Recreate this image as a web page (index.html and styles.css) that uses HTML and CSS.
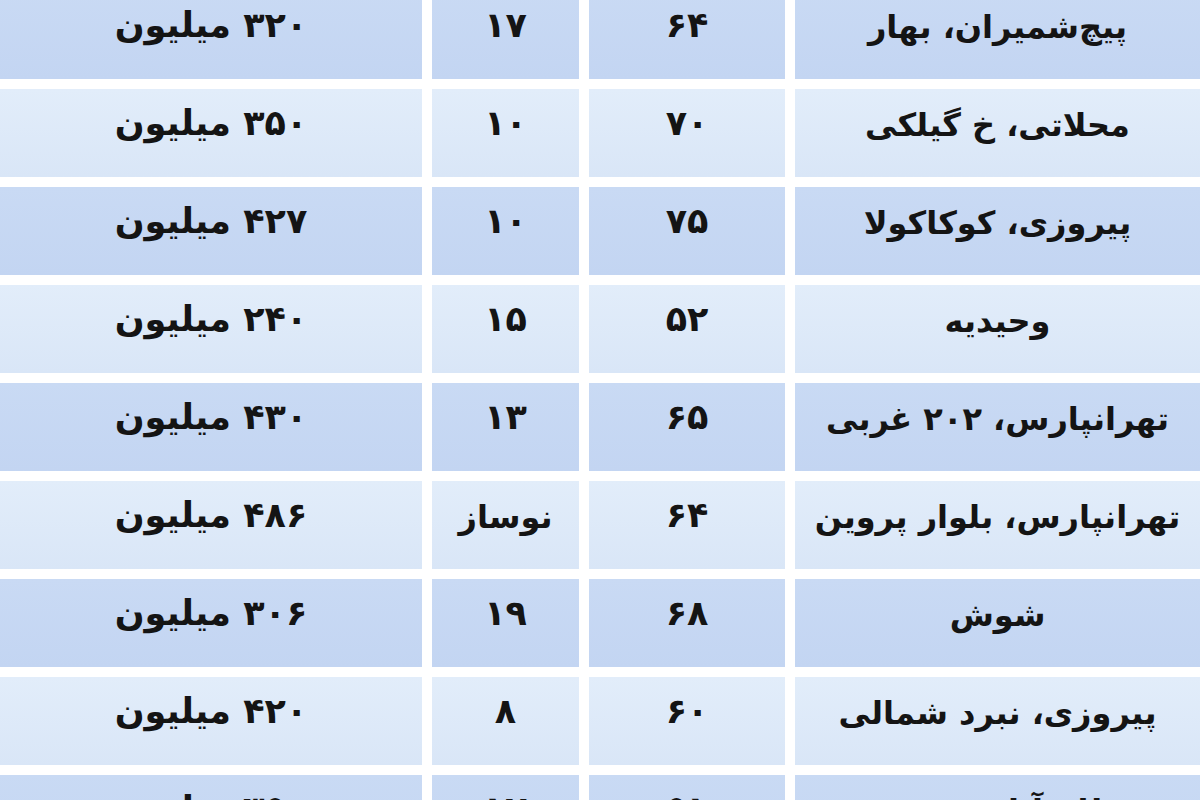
FILE: index.html
```html
<!DOCTYPE html>
<html lang="fa" dir="rtl">
<head>
<meta charset="utf-8">
<link rel="stylesheet" href="styles.css">
</head>
<body>
<div class="table">
  <div class="cell dark loc">پیچ‌شمیران، بهار</div><div class="cell dark">۶۴</div><div class="cell dark">۱۷</div><div class="cell dark">۳۲۰ میلیون</div>
  <div class="cell light loc">محلاتی، خ گیلکی</div><div class="cell light">۷۰</div><div class="cell light">۱۰</div><div class="cell light">۳۵۰ میلیون</div>
  <div class="cell dark loc">پیروزی، کوکاکولا</div><div class="cell dark">۷۵</div><div class="cell dark">۱۰</div><div class="cell dark">۴۲۷ میلیون</div>
  <div class="cell light loc">وحیدیه</div><div class="cell light">۵۲</div><div class="cell light">۱۵</div><div class="cell light">۲۴۰ میلیون</div>
  <div class="cell dark loc">تهرانپارس، ۲۰۲ غربی</div><div class="cell dark">۶۵</div><div class="cell dark">۱۳</div><div class="cell dark">۴۳۰ میلیون</div>
  <div class="cell light loc">تهرانپارس، بلوار پروین</div><div class="cell light">۶۴</div><div class="cell light loc">نوساز</div><div class="cell light">۴۸۶ میلیون</div>
  <div class="cell dark loc">شوش</div><div class="cell dark">۶۸</div><div class="cell dark">۱۹</div><div class="cell dark">۳۰۶ میلیون</div>
  <div class="cell light loc">پیروزی، نبرد شمالی</div><div class="cell light">۶۰</div><div class="cell light">۸</div><div class="cell light">۴۲۰ میلیون</div>
  <div class="cell dark loc">نظام آباد، مجیدیه</div><div class="cell dark">۵۱</div><div class="cell dark">۱۲</div><div class="cell dark">۳۵۰ میلیون</div>
</div>
</body>
</html>
```
FILE: styles.css
```css
html, body {
  margin: 0;
  padding: 0;
  background: #ffffff;
  overflow: hidden;
}
body {
  width: 1200px;
  height: 800px;
}
.table {
  display: grid;
  grid-template-columns: 405px 196px 147px 1fr;
  grid-auto-rows: 88px;
  gap: 10px;
  margin-top: -9px;
  direction: rtl;
  font-family: "DejaVu Sans", sans-serif;
  font-weight: bold;
  font-size: 35px;
  line-height: 1.2;
  color: #141414;
}
.cell {
  display: flex;
  align-items: center;
  justify-content: center;
  padding-bottom: 20px;
  box-sizing: border-box;
  white-space: nowrap;
}
.loc {
  font-size: 32px;
  padding-bottom: 16px;
}
.dark {
  background: linear-gradient(#c9daf4, #c3d5f2);
}
.light {
  background: linear-gradient(#e2edfa, #d9e6f7);
}
```
